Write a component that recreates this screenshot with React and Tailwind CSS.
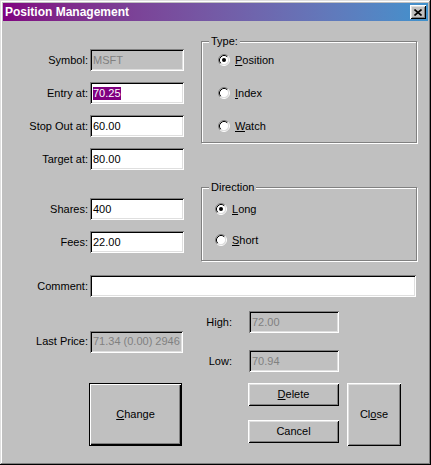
import React from "react";

const sunken =
  "shadow-[inset_1px_1px_0_#808080,inset_-1px_-1px_0_#fff,inset_2px_2px_0_#000,inset_-2px_-2px_0_#dfdfdf]";
const raised =
  "shadow-[inset_1px_1px_0_#fff,inset_-1px_-1px_0_#000,inset_2px_2px_0_#dfdfdf,inset_-2px_-2px_0_#808080]";

function TextBox({ value, disabled, width = "w-[94px]", children }) {
  return (
    <div
      className={`${width} h-[22px] ml-[2px] flex items-center pl-[3px] ${sunken} ${
        disabled ? "bg-[#c0c0c0] text-[#808080]" : "bg-white text-black"
      }`}
    >
      {children ?? value}
    </div>
  );
}

function Row({ label, children }) {
  return (
    <div className="flex items-center h-[22px]">
      <span className="w-[85px] text-right">{label}</span>
      {children}
    </div>
  );
}

function Radio({ checked }) {
  return (
    <svg width="12" height="12" viewBox="0 0 12 12" className="shrink-0">
      <circle cx="6" cy="6" r="4.5" fill="#fff" />
      <path d="M2.11 9.89 A5.5 5.5 0 0 1 9.89 2.11" stroke="#808080" fill="none" />
      <path d="M9.89 2.11 A5.5 5.5 0 0 1 2.11 9.89" stroke="#fff" fill="none" />
      <path d="M2.82 9.18 A4.5 4.5 0 0 1 9.18 2.82" stroke="#000" fill="none" />
      <path d="M9.18 2.82 A4.5 4.5 0 0 1 2.82 9.18" stroke="#dfdfdf" fill="none" />
      {checked && <circle cx="6" cy="6" r="2" fill="#000" />}
    </svg>
  );
}

function Option({ checked, hot, rest, className }) {
  return (
    <div className={`flex items-center h-[16px] ${className}`}>
      <Radio checked={checked} />
      <span className="ml-[5px]">
        <u>{hot}</u>
        {rest}
      </span>
    </div>
  );
}

function GroupBox({ title, className, children }) {
  return (
    <div
      className={`border border-[#808080] shadow-[1px_1px_0_#fff,inset_1px_1px_0_#fff] ${className}`}
    >
      <div className="-mt-[8px] ml-[7px] w-fit px-[2px] bg-[#c0c0c0] leading-[14px]">{title}</div>
      {children}
    </div>
  );
}

export default function App() {
  return (
    <div
      className="w-[431px] h-[465px] bg-[#c0c0c0] p-[3px] text-[11px] text-black shadow-[inset_-1px_-1px_0_#000,inset_1px_1px_0_#dfdfdf,inset_-2px_-2px_0_#808080,inset_2px_2px_0_#fff]"
      style={{ fontFamily: '"Liberation Sans", Arial, sans-serif' }}
    >
      {/* title bar */}
      <div className="h-[18px] flex items-center justify-between pl-[2px] pr-[2px] bg-gradient-to-r from-[#800080] to-[#3f92cd]">
        <span className="text-white font-bold text-[12px]">Position Management</span>
        <div className={`w-[16px] h-[14px] bg-[#c0c0c0] flex items-center justify-center ${raised}`}>
          <svg width="8" height="7" viewBox="0 0 8 7">
            <path d="M0.5 0.5 L7.5 6.5 M7.5 0.5 L0.5 6.5" stroke="#000" strokeWidth="1.6" />
          </svg>
        </div>
      </div>

      {/* top section */}
      <div className="flex h-[254px]">
        <div className="flex flex-col w-[181px] pt-[28px] gap-[11px]">
          <Row label="Symbol:">
            <TextBox value="MSFT" disabled />
          </Row>
          <Row label="Entry at:">
            <TextBox>
              <span className="bg-[#800080] text-white leading-[13px]">70.25</span>
            </TextBox>
          </Row>
          <Row label="Stop Out at:">
            <TextBox value="60.00" />
          </Row>
          <Row label="Target at:">
            <TextBox value="80.00" />
          </Row>
          <div className="mt-[17px]">
            <Row label="Shares:">
              <TextBox value="400" />
            </Row>
          </div>
          <Row label="Fees:">
            <TextBox value="22.00" />
          </Row>
        </div>

        <div className="ml-[17px] pt-[20px]">
          <GroupBox title="Type:" className="w-[216px] h-[102px]">
            <Option checked hot="P" rest="osition" className="ml-[16px] mt-[4px]" />
            <Option hot="I" rest="ndex" className="ml-[16px] mt-[17px]" />
            <Option hot="W" rest="atch" className="ml-[16px] mt-[17px]" />
          </GroupBox>
          <GroupBox title="Direction" className="w-[216px] h-[74px] mt-[44px]">
            <Option checked hot="L" rest="ong" className="ml-[13px] mt-[7px]" />
            <Option hot="S" rest="hort" className="ml-[13px] mt-[15px]" />
          </GroupBox>
        </div>
      </div>

      {/* comment */}
      <Row label="Comment:">
        <TextBox value="" width="w-[326px]" />
      </Row>

      {/* prices */}
      <div className="flex mt-[14px] h-[61px]">
        <div className="flex items-center">
          <Row label="Last Price:">
            <TextBox value="71.34 (0.00) 2946" disabled width="w-[93px]" />
          </Row>
        </div>
        <div className="ml-[1px] flex flex-col justify-between">
          <div className="flex items-center h-[22px]">
            <span className="w-[48px] text-right">High:</span>
            <div className="ml-[15px]">
              <TextBox value="72.00" disabled width="w-[90px]" />
            </div>
          </div>
          <div className="flex items-center h-[22px]">
            <span className="w-[48px] text-right">Low:</span>
            <div className="ml-[15px]">
              <TextBox value="70.94" disabled width="w-[90px]" />
            </div>
          </div>
        </div>
      </div>

      {/* buttons */}
      <div className="flex items-start mt-[11px]">
        <button className="ml-[86px] w-[93px] h-[63px] border border-black bg-[#c0c0c0] shadow-[inset_1px_1px_0_#fff,inset_-1px_-1px_0_#000,inset_-2px_-2px_0_#808080]">
          <u>C</u>hange
        </button>
        <div className="ml-[66px] w-[91px] flex flex-col">
          <button className={`h-[23px] bg-[#c0c0c0] ${raised}`}>
            <u>D</u>elete
          </button>
          <button className={`h-[23px] mt-[14px] bg-[#c0c0c0] ${raised}`}>Cancel</button>
        </div>
        <button className={`ml-[8px] w-[54px] h-[63px] bg-[#c0c0c0] ${raised}`}>
          Cl<u>o</u>se
        </button>
      </div>
    </div>
  );
}
